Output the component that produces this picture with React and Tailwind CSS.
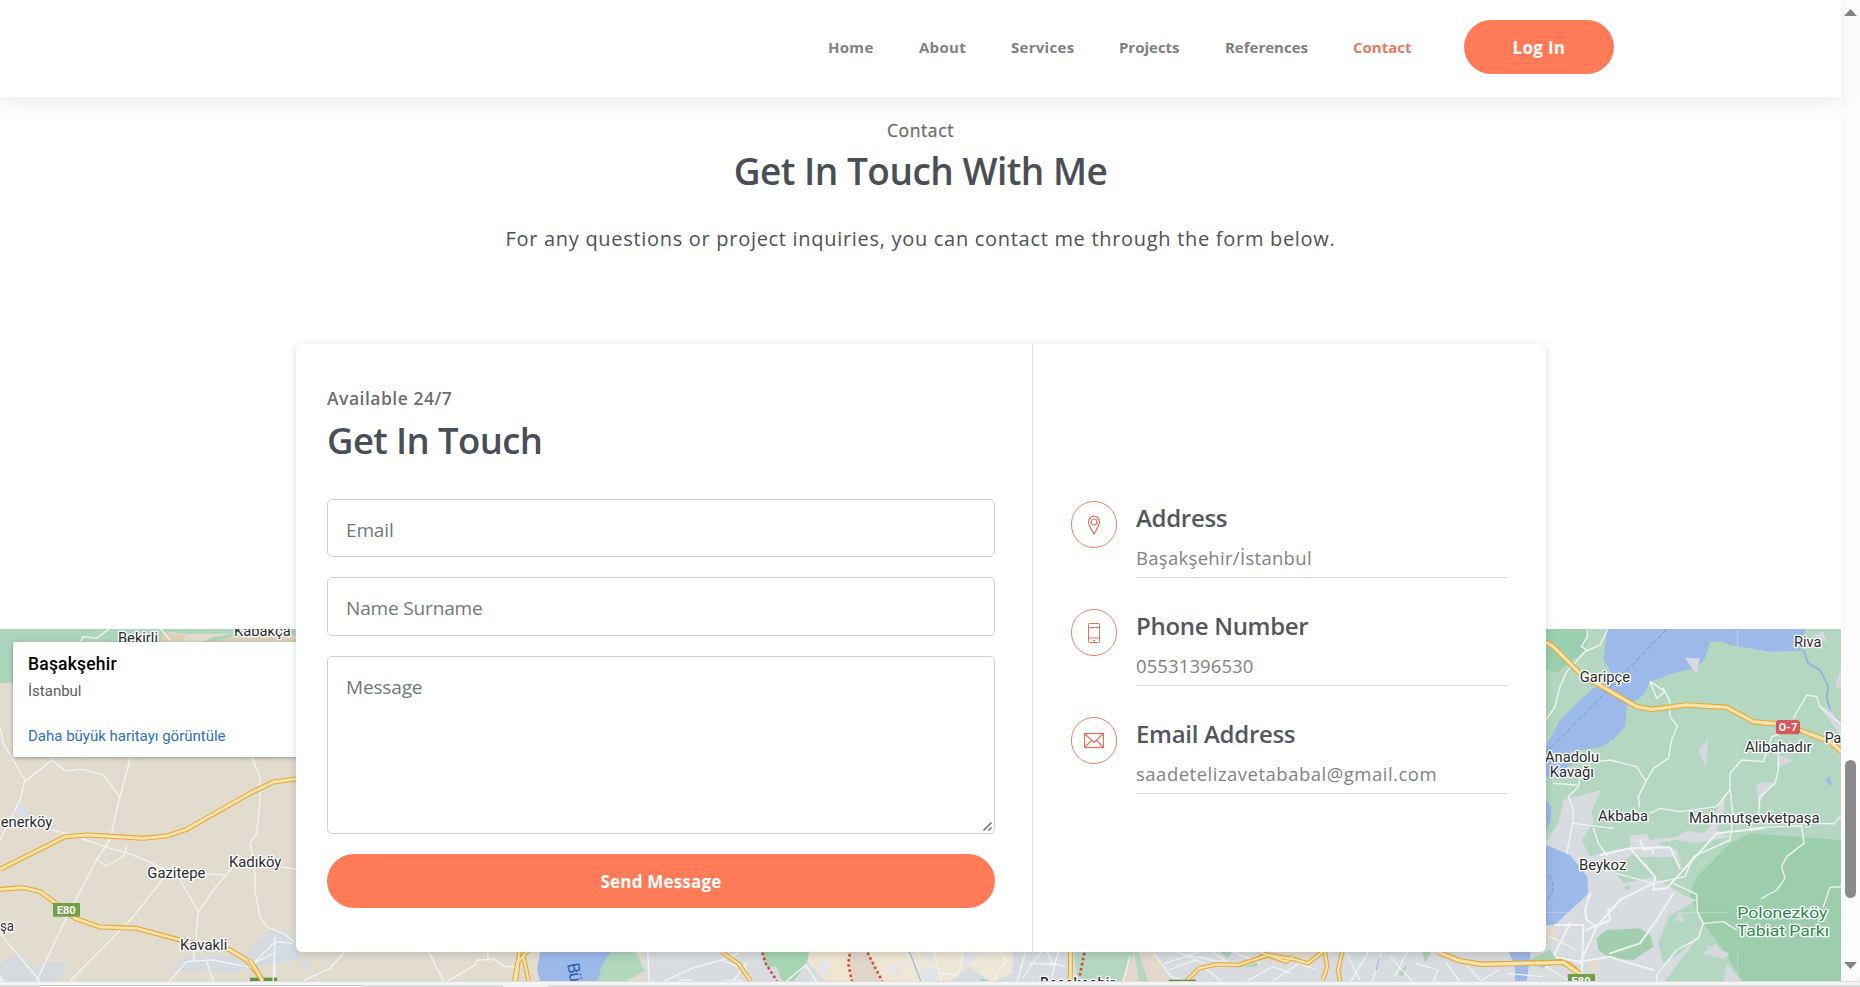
import React from "react";

const nav = [
  ["Home", "tracking-[0.3px]"],
  ["About", "ml-[45.4px] tracking-[0.3px]"],
  ["Services", "ml-[45px] tracking-[0.3px]"],
  ["Projects", "ml-[44.5px]"],
  ["References", "ml-[45.4px]"],
];

function Road({ d, w = 3, c = "#f1f4f3" }) {
  return <path d={d} fill="none" stroke={c} strokeWidth={w} strokeLinejoin="round" strokeLinecap="round" vectorEffect="non-scaling-stroke" />;
}

function Highway({ d, w = 5 }) {
  return (
    <g fill="none" strokeLinejoin="round">
      <path d={d} stroke="#e2a83c" strokeWidth={w} vectorEffect="non-scaling-stroke" />
      <path d={d} stroke="#fae3a6" strokeWidth={w - 2.2} vectorEffect="non-scaling-stroke" />
    </g>
  );
}

function Label({ x, y, w, children, size = 42, color = "#2a2b2e" }) {
  return (
    <text x={x} y={y} textLength={w} lengthAdjust="spacingAndGlyphs" fontSize={size} fill={color} stroke="#fff" strokeWidth="8" strokeLinejoin="round" paintOrder="stroke" fontFamily="Roboto, sans-serif">
      {children}
    </text>
  );
}

function Map() {
  return (
    <svg className="block h-[352px] w-[1841px]" viewBox="0 629 1841 352">
      <rect x="0" y="629" width="1841" height="352" fill="#e2dccf" />
      {/* western plain */}
      <g transform="translate(0 600) scale(0.33333)">
        <path d="M0 80H900V130H600L640 112L700 100L560 102L510 95L480 130H40V250H0Z" fill="#acd6bc" />
        <path d="M490 97L560 105L540 130H480ZM620 128L700 110L900 106V130Z" fill="#ddd0b8" />
        <path d="M0 1090L60 1060L100 1100L150 1085L205 1085L180 1143H0ZM510 1110L560 1070L740 1060L790 1000L850 990L900 1030V1080L820 1090L700 1120Z" fill="#d6dade" />
        <path d="M40 640L65 610L90 650Z" fill="#d6dfec" />
        <Road w={1.4} d="M240 130L250 110L290 115L330 85M480 85L510 120M0 380L10 430L75 540L60 600L0 720M75 545L155 480L195 512L250 508L310 525L358 590M392 470L355 610L330 720L290 780L200 950L110 1143M155 690L200 700L330 745L400 765L490 805L530 835M290 780L320 798L370 770L380 740M490 835L400 950L210 1143M540 840L595 935L580 1085M595 935L640 870L700 800M600 820L680 825M755 470L780 530V600L770 700L750 730L765 800V870L780 950L800 980L850 1000L890 1030M840 800L900 810M0 1000L120 1143M510 1143L560 1085L640 1080L740 1100L880 1030M620 1085L640 1143M825 1010V1143" />
        <Highway d="M0 808L195 710L265 705L430 715L500 708L560 688L750 580L820 546L895 536" />
        <Highway d="M0 868L70 863L120 875L175 915L225 955L300 981L410 985L540 1020L690 1050L740 1080L790 1143" />
        <rect x="159" y="909" width="81" height="41" fill="#6f9f46" />
        <text x="171" y="942" textLength="56" fontSize="33" fontWeight="700" fill="#fff" fontFamily="Roboto, sans-serif">E80</text>
        <rect x="750" y="1133" width="82" height="12" fill="#5f9440" />
        <Label x={354} y={130} w={120}>Bekirli</Label>
        <Label x={702} y={107} w={170}>Kabakça</Label>
        <Label x={2} y={681} w={155}>enerköy</Label>
        <Label x={442} y={833} w={174}>Gazitepe</Label>
        <Label x={687} y={801} w={157}>Kadıköy</Label>
        <Label x={0} y={994} w={42}>şa</Label>
        <Label x={540} y={1051} w={142}>Kavakli</Label>
      </g>

      {/* Bosphorus side */}
      <g transform="translate(1530 610) scale(0.33333)">
        <rect x="0" y="55" width="935" height="1065" fill="#b4d7c1" />
        <path d="M0 55H175L165 120L80 190L0 160Z" fill="#9ccfad" />
        <path d="M480 860L500 800L600 700L660 670L935 690V1120H640L580 1020L520 940L490 880Z" fill="#9dceac" />
        <path d="M232 55H825L820 122L720 125L600 105L580 95H540L525 145L500 175L470 180L430 190L360 215L340 255L290 290L285 350L255 385L215 410L120 425L150 450L110 470L100 500H0V430L45 415L90 330L140 280L190 235L235 215L240 180L220 150Z" fill="#9bb9e9" />
        <path d="M820 120L835 160L870 180L895 230L890 260L903 310" fill="none" stroke="#8bb0e8" strokeWidth="5" />
        <path d="M45 430L205 270L410 58" fill="none" stroke="#6f97d2" strokeWidth="3" strokeDasharray="16 7" />
        <path d="M100 570L215 540L185 600L190 640L155 690L180 740L250 720L300 715L300 675L350 672L360 690L440 680L470 662L520 670L540 650L560 600L585 550L580 610L560 660L600 680L500 700L440 690L380 700L440 720L460 780L440 740L300 742L350 760L370 800L470 860L500 870L415 920L385 1000L400 1060L450 1030L510 970L490 1000L400 1120H60L0 1050V700L50 690L85 640Z" fill="#d8dce0" />
        <path d="M560 1000L520 1030L580 1048ZM520 1005L580 1050L600 1030ZM465 143L510 145L500 195ZM535 388L505 420L528 475ZM750 435L788 452L745 472ZM680 520L735 515L685 580ZM850 75L880 65L892 100ZM865 285L900 300L935 345V380ZM915 230L935 165V235ZM435 930L450 905L463 935ZM590 1060L580 1120H640Z" fill="#d6d9df" />
        <path d="M48 705L120 735L172 800L175 850L155 870L100 920L75 945H45ZM48 570L65 590L60 640L48 660ZM885 512L900 497L905 530Z" fill="#9bb9e9" />
        <path d="M57 795L68 820V845L55 865" fill="none" stroke="#6f97d2" strokeWidth="3" strokeDasharray="14 7" />
        <path d="M200 985L230 960L330 955L360 975L370 1010L310 1050L240 1045L205 1020Z" fill="#a0ceae" />
        <path d="M250 780L310 730L370 800L280 820ZM280 830L305 825L292 842Z" fill="#b4d7c1" />
        <path d="M170 1080L195 1035L210 1080ZM50 960L85 950L80 990H50Z" fill="#e5dccd" />
        <path d="M623 55V700M623 1030V1120M48 907H600" stroke="#c9e2d2" strokeWidth="2" />
        <Road w={1.4} d="M232 60L210 105L165 125L110 185L90 230L75 290L48 330M172 60V80L155 110L172 122M400 235L420 275V320L442 348L425 390L415 445L370 475L348 515L325 560L328 590M348 515L320 470L240 450L200 455M360 215L380 265L405 245ZM150 500L145 530L115 560L130 600L128 640L110 730M70 520L140 525M130 640L250 655M190 655L205 700L230 735M360 610L390 595L450 605L560 590L600 540V490L635 450L700 455L725 380L750 372M600 540L610 620L600 690M745 400V480L735 520L690 560L685 620M790 325L830 255L860 260L870 290L935 345M870 640L910 642L935 615M660 655L740 650L815 648L822 700L770 740L755 770L765 805L740 840L695 865M935 830L900 832L880 890M430 820L500 853L502 905L520 940L580 935L620 960M600 690L490 740L465 800L370 820L260 790M520 940L505 985L440 1020L380 1095V1120" />
        <Road w={2} d="M210 735L300 715L375 800L370 840L410 835L560 670L700 655M330 690L340 720L365 715L370 730M300 715L420 712L450 775M370 820L270 870L200 950L150 1060M200 950L170 930L165 900L180 850M75 945H160L155 1100M235 895L240 930L170 960M240 1030L330 1000L380 930L430 850M120 940L90 1000L70 1040L150 1055L240 1040L300 1060L370 1080" />
        <Highway w={5.5} d="M0 85L48 97L70 110L150 190L200 220L320 290L365 298L470 285L590 292L670 335L740 342L800 357L900 395L935 425" />
        <Highway w={5.5} d="M0 1058L90 1055L120 1065L150 1092" />
        <rect x="113" y="1092" width="82" height="30" fill="#6f9f46" />
        <text x="125" y="1124" textLength="56" fontSize="33" fontWeight="700" fill="#fff" fontFamily="Roboto, sans-serif">E80</text>
        <rect x="738" y="330" width="72" height="43" rx="10" fill="#d4585c" />
        <text x="746" y="363" textLength="56" fontSize="32" fontWeight="700" fill="#fff" fontFamily="Roboto, sans-serif">O-7</text>
        <Label x={792} y={112} w={82}>Riva</Label>
        <Label x={149} y={216} w={151}>Garipçe</Label>
        <Label x={45} y={457} w={162}>Anadolu</Label>
        <Label x={59} y={502} w={133}>Kavağı</Label>
        <Label x={645} y={426} w={200}>Alibahadır</Label>
        <Label x={884} y={399} w={50}>Pa</Label>
        <Label x={204} y={632} w={150}>Akbaba</Label>
        <Label x={477} y={638} w={392}>Mahmutşevketpaşa</Label>
        <Label x={147} y={779} w={142}>Beykoz</Label>
        <Label x={622} y={924} w={270} size={46} color="#2b8a4b">Polonezköy</Label>
        <Label x={620} y={977} w={277} size={46} color="#2b8a4b">Tabiat Parkı</Label>
      </g>

      {/* southern strip, west half */}
      <g transform="translate(250 930) scale(0.42092 0.33333)">
        <path d="M940 60H1568V155H940L930 120Z" fill="#d9dcdf" />
        <path d="M120 100L140 90L132 125ZM35 0L110 40V90L60 95Z" fill="#d3dbe4" />
        <path d="M690 60H860L830 155H690L682 120Z" fill="#9bb9e9" />
        <path d="M860 60H915L938 122L890 155H825L835 110Z" fill="#b0d8bc" />
        <path d="M1215 60H1330L1320 105L1290 155H1265L1250 110H1225Z" fill="#a5d6b1" />
        <path d="M1330 60H1568V155H1370L1325 95Z" fill="#efe6d2" />
        <path d="M1420 66H1470L1500 155H1430Z" fill="#dfd6c9" />
        <path d="M1350 95L1375 90V135L1355 130ZM1515 110L1545 100L1540 135L1515 130Z" fill="#e3e4e8" />
        <Road w={1.5} d="M225 66L190 115L130 150M425 66L460 153M470 153L535 105L540 90L580 88L605 110H630M565 66V88M0 110L60 35L100 40M60 20L55 153M945 66L948 153M985 153L1050 115L1120 90L1160 70M1120 90L1180 120M1180 100L1150 150M1275 153L1320 105L1345 153M1020 150H1050M1125 152H1170" />
        <Highway d="M0 90L30 153" />
        <Highway w={4.5} d="M660 62L635 100L628 153M640 66L632 153M650 80L662 153M1120 66L1160 100L1190 153" />
        <path d="M1217 68L1225 100L1252 153M1425 72L1421 100L1430 153M1467 68L1480 100L1502 153" fill="none" stroke="#d9443f" strokeWidth="2.6" strokeDasharray="2.6 2.6" vectorEffect="non-scaling-stroke" />
      </g>
      <text x="0" y="0" transform="translate(567 964) rotate(80)" textLength="19" fontSize="17" fill="#2d5fa8" fontFamily="Roboto, sans-serif">Bü</text>

      {/* southern strip, east half */}
      <g transform="translate(900 930) scale(0.43367 0.33333)">
        <path d="M0 60H1500V155H0Z" fill="#d8dce0" />
        <path d="M0 60H260V130L210 155L160 110L130 140L110 155H0Z" fill="#eee6d6" />
        <path d="M50 75L80 70L70 100ZM45 120L90 110L80 155H55ZM140 62L180 80L150 110Z" fill="#e0e3e9" />
        <path d="M400 60H550L575 155H410Z" fill="#b4d7c1" />
        <path d="M540 66L510 155H550L545 100ZM550 66H585L625 155H572Z" fill="#e2d9cb" />
        <path d="M830 66H960L930 95L840 100Z" fill="#e2dacd" />
        <path d="M740 66H765L755 85ZM790 110L830 95L820 110ZM1205 66H1225L1210 100ZM1150 130L1168 105L1160 140ZM1450 90L1500 60L1515 90L1480 115ZM180 145L205 150L190 155Z" fill="#a9d3b5" />
        <path d="M1402 60H1455L1445 155H1418V110Z" fill="#9bb9e9" />
        <Road w={1.3} d="M80 66L90 130L135 135L145 66M95 130V153M232 66L245 95L225 125L220 153M290 66L270 153M325 66L285 140M340 66L350 100L380 110M300 100L370 105M365 66L350 140M530 80L515 153M585 70L625 140L660 153M610 100L690 66M620 120L700 80M640 66L700 100M660 75L760 100L720 66M700 110L740 153M770 66L830 100M800 153L860 110L900 130M860 153L920 100L960 120M1030 70L1060 150M1080 66L1040 153M1110 66L1090 153M1130 80L1180 153M1170 66L1140 140M1190 100L1240 120L1230 153M1260 100L1290 153M1310 110L1340 153L1380 120M1400 130L1480 140M1490 110L1540 150M1500 20L1560 60" />
        <path d="M22 66L48 153M1105 85L1098 120" fill="none" stroke="#86a9de" strokeWidth="1" vectorEffect="non-scaling-stroke" />
        <Highway d="M393 60V153" />
        <Highway w={4.5} d="M660 153L690 115L730 103L780 105L850 75L910 88L940 100L975 66M830 66L890 95L905 80M980 66L985 110L975 150M1020 66L1010 120L1015 153" />
        <Highway w={5.5} d="M1240 66L1290 92L1340 103L1530 97L1560 125" />
        <path d="M425 68L414 140" fill="none" stroke="#d9443f" strokeWidth="2.6" strokeDasharray="2.6 2.6" vectorEffect="non-scaling-stroke" />
        <rect x="620" y="149" width="62" height="6" fill="#5f9440" />
      </g>
      <text x="1040" y="988" textLength="75" fontSize="14" fontWeight="500" fill="#2a2b2e" stroke="#fff" strokeWidth="2.6" paintOrder="stroke" fontFamily="Roboto, sans-serif">Başakşehir</text>
      <rect x="1568" y="974" width="27" height="8" fill="#6f9f46" />
      <text x="1571.5" y="984.6" textLength="19" fontSize="11" fontWeight="700" fill="#fff" fontFamily="Roboto, sans-serif">E80</text>
    </svg>
  );
}

function PinIcon() {
  return (
    <svg className="h-5 w-5" viewBox="0 0 20 20" fill="none" stroke="#df7257" strokeWidth="1.2">
      <path d="M10 19C8.4 15.4 4.5 11.3 4.5 6.8A5.5 5.7 0 0 1 15.5 6.8C15.5 11.3 11.6 15.4 10 19Z" />
      <circle cx="10" cy="7" r="3" />
    </svg>
  );
}

function PhoneIcon() {
  return (
    <svg className="h-5 w-5" viewBox="0 0 20 20" fill="none" stroke="#df7257" strokeWidth="1">
      <rect x="4.5" y="0.5" width="11" height="19" rx="0.8" />
      <path d="M4.5 4.5H15.5M4.5 15H15.5" />
      <path d="M9 17.5H11" />
    </svg>
  );
}

function MailIcon() {
  return (
    <svg className="h-5 w-5" viewBox="0 0 20 20" fill="none" stroke="#df7257" strokeWidth="1.2">
      <rect x="0.5" y="2.5" width="19" height="14" />
      <path d="M1 3L10 11.5L19 3M1 16L7.5 9.5M19 16L12.5 9.5" />
    </svg>
  );
}

function Info({ icon, title, text, textClass }) {
  return (
    <div className="flex">
      <div className="-mt-px flex h-[47px] w-[46px] shrink-0 items-center justify-center rounded-full border border-[#ea7f68]">{icon}</div>
      <div className="ml-[19px] w-[372px] border-b border-[#dcdddf] pb-[5px]">
        <h5 className="pt-px text-[24px] leading-[29px] font-semibold tracking-[-0.3px] text-[#54575d]">{title}</h5>
        <p className="mt-3 text-[18.5px] leading-[28px] text-[#808285]"><span className={textClass}>{text}</span></p>
      </div>
    </div>
  );
}

const field = "flex items-center rounded-[5px] border border-[#ced2d6] px-[18px] pt-1 text-[19px] tracking-[-0.15px] text-[#70777e]";

export default function App() {
  return (
    <div className="flex h-[987px] w-[1860px] flex-col overflow-hidden bg-[#f3f3f3] font-['Open_Sans',sans-serif]">
      <div className="flex h-[981px] overflow-hidden rounded-b-lg bg-white">
        <main className="flex w-[1841px] flex-col">
          <header className="z-10 flex h-[97px] shrink-0 items-center bg-white pb-[3px] pl-[828px] text-[15px] font-bold text-[#808080] shadow-[0_8px_20px_rgba(60,72,100,0.09)]">
            {nav.map(([t, c]) => (
              <a key={t} className={c}>{t}</a>
            ))}
            <a className="ml-[45px] text-[#e8795f]">Contact</a>
            <button className="ml-[52.5px] h-[54px] w-[150px] rounded-full bg-[#ff7b57] pt-0.5 text-[17px] font-bold tracking-[0.3px] text-white">Log In</button>
          </header>

          <section className="flex h-[247px] shrink-0 flex-col items-center pt-5">
            <h6 className="text-[17.5px] leading-[26px] tracking-[0.6px] text-[#6c6d70] [-webkit-text-stroke:0.3px]">Contact</h6>
            <h2 className="mt-1.5 text-[37px] leading-[44px] font-semibold tracking-[-0.5px] text-[#4a4f57]">Get In Touch With Me</h2>
            <p className="mt-[31px] text-[20px] leading-[30px] tracking-[0.7px] text-[#4f5256]">For any questions or project inquiries, you can contact me through the form below.</p>
          </section>

          <section className="grid h-[637px] shrink-0">
            <div className="relative col-start-1 row-start-1 self-end">
              <Map />
              <div className="absolute top-[13px] left-[13px] h-[115px] w-[300px] rounded-[2px] bg-white pl-[15px] font-[Roboto,sans-serif] shadow-[0_1px_4px_rgba(0,0,0,0.3)]">
                <div className="pt-[12px] text-[17.5px] leading-[20px] font-medium tracking-[0.2px] text-black">Başakşehir</div>
                <div className="mt-[7px] text-[15px] leading-[20px] text-[#5b5b5b]">İstanbul</div>
                <div className="mt-[25px] text-[15px] leading-[20px] text-[#2a6fc9]">Daha büyük haritayı görüntüle</div>
              </div>
            </div>
            <div className="z-10 col-start-1 row-start-1 ml-[296px] flex h-[608px] w-[1250px] rounded-md bg-white shadow-[0_2px_8px_rgba(0,0,0,0.16)]">
              <form className="flex w-[737px] flex-col border-r border-[#dedfe1] pt-[41px] pr-[37px] pl-[31px]">
                <h6 className="text-[17.5px] leading-[26px] font-semibold tracking-[0.5px] text-[#6c6d70]">Available 24/7</h6>
                <h2 className="mt-[7px] text-[36.5px] leading-[44px] font-semibold tracking-[-0.6px] text-[#4a4f57]">Get In Touch</h2>
                <div className={`mt-[37px] h-[58px] ${field}`}>Email</div>
                <div className={`mt-5 h-[59px] ${field}`}>Name Surname</div>
                <div className="relative mt-5 h-[178px] rounded-[5px] border border-[#ced2d6] px-[18px] pt-[17px] text-[19px] leading-[26px] tracking-[-0.15px] text-[#70777e]">
                  Message
                  <svg className="absolute right-0.5 bottom-0.5 h-[9px] w-[9px]" viewBox="0 0 9 9" stroke="#55585b" strokeWidth="1.3"><path d="M0.5 8.5L8.5 0.5M5.5 8.5L8.5 5.5" /></svg>
                </div>
                <button type="button" className="mt-5 h-[54px] rounded-full bg-[#ff7b57] pt-0.5 text-[17px] font-bold tracking-[0.2px] text-white">Send Message</button>
              </form>
              <div className="flex flex-col gap-8 pt-[158px] pl-[38px]">
                <Info icon={<PinIcon />} title="Address" text="Başakşehir/İstanbul" textClass="tracking-[0.3px]" />
                <Info icon={<PhoneIcon />} title="Phone Number" text="05531396530" textClass="tracking-[0.1px]" />
                <Info icon={<MailIcon />} title="Email Address" text="saadetelizavetababal@gmail.com" textClass="tracking-[0.5px]" />
              </div>
            </div>
          </section>
        </main>

        <aside className="flex h-[981px] w-[19px] flex-col items-center bg-[#fcfcfc]">
          <svg className="mt-[9px] h-[7px] w-[13px]" viewBox="0 0 13 7"><path d="M6.5 0L13 7H0Z" fill="#858585" /></svg>
          <div className="mt-[744px] h-[138px] w-[11px] rounded-full bg-[#8b8b8b]" />
          <svg className="mt-16 h-[7px] w-[13px]" viewBox="0 0 13 7"><path d="M0 0H13L6.5 7Z" fill="#858585" /></svg>
        </aside>
      </div>
      <div className="h-[1px] w-full bg-[#dcdcdc]" />
      <div className="h-[3px] w-full bg-[#f5f5f5]" />
      <div className="flex h-[2px] w-full bg-[#dedede]">
        <div className="ml-10 h-[2px] w-[322px] border-t border-[#bdbdbd] bg-white" />
        <div className="ml-[141px] h-[2px] w-[45px] bg-[#f3f3f3]" />
      </div>
    </div>
  );
}
